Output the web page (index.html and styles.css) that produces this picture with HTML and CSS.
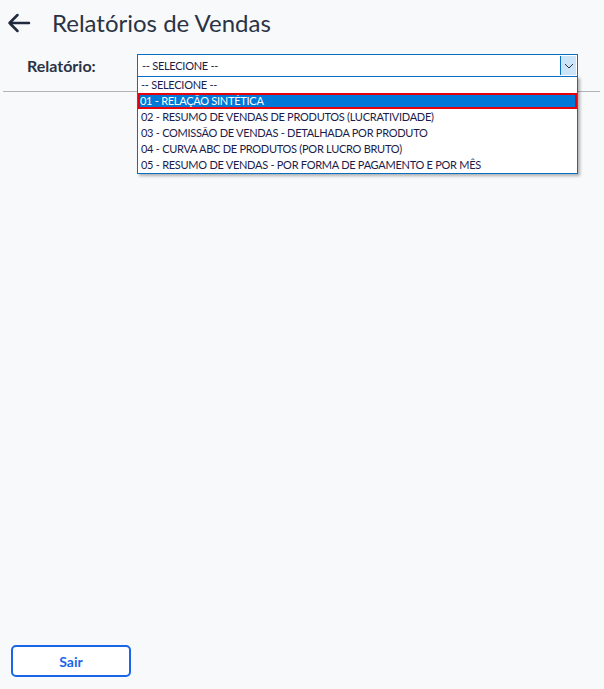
FILE: index.html
```html
<!DOCTYPE html>
<html lang="pt">
<head>
    <meta charset="UTF-8">
    <meta name="viewport" content="width=device-width, initial-scale=1.0">
    <title>Relatórios de Vendas</title>
    <link rel="stylesheet" href="styles.css">
</head>
<body>

<div class="page">
    <div class="header">
        <a class="back" href="#">
            <svg width="24" height="20" viewBox="0 0 24 20">
                <path d="M22 10H2.5M10.5 2L2.5 10l8 8" fill="none" stroke="#1f2a3c" stroke-width="2.5" stroke-linecap="round" stroke-linejoin="round"/>
            </svg>
        </a>
        <h1>Relatórios de Vendas</h1>
    </div>

    <div class="form-row">
        <label>Relatório:</label>
        <div class="select">
            <span class="select-value">-- SELECIONE --</span>
            <span class="select-btn">
                <svg width="10" height="6" viewBox="0 0 10 6"><path d="M1 1l4 4 4-4" fill="none" stroke="#333" stroke-width="1"/></svg>
            </span>
            <ul class="options">
                <li>-- SELECIONE --</li>
                <li class="active">01 - RELAÇÃO SINTÉTICA</li>
                <li>02 - RESUMO DE VENDAS DE PRODUTOS (LUCRATIVIDADE)</li>
                <li>03 - COMISSÃO DE VENDAS - DETALHADA POR PRODUTO</li>
                <li>04 - CURVA ABC DE PRODUTOS (POR LUCRO BRUTO)</li>
                <li>05 - RESUMO DE VENDAS - POR FORMA DE PAGAMENTO E POR MÊS</li>
            </ul>
        </div>
    </div>
    <div class="divider"></div>

    <div class="content"></div>

    <div class="footer">
        <button class="btn-sair">Sair</button>
    </div>
</div>

</body>
</html>
```

FILE: styles.css
```css
body {
    font-family: Lato, "Noto Sans", sans-serif;
    background-color: #f8f9fa;
    margin: 0;
    color: #1f2a3c;
}
.page {
    height: 689px;
    display: flex;
    flex-direction: column;
}
.header {
    display: flex;
    align-items: center;
    height: 46px;
    padding-left: 7px;
}
.back {
    display: flex;
    width: 45px;
}
.header h1 {
    margin: 0;
    font-size: 24px;
    font-weight: 400;
    color: #2a3345;
    position: relative;
    top: -1px;
}
.form-row {
    display: flex;
    align-items: center;
    padding-top: 8px;
    height: 23px;
}
.form-row label {
    width: 110px;
    padding-left: 27px;
    font-size: 16px;
    font-weight: 700;
    color: #2a3345;
}
.select {
    position: relative;
    width: 439px;
    height: 21px;
    border: 1px solid #0a6fc2;
    background: #fff;
    display: flex;
    align-items: center;
    font-size: 11px;
    letter-spacing: -0.27px;
    color: #1c1c4a;
}
.select-value {
    flex: 1;
    padding-left: 4px;
}
.select-btn {
    width: 15px;
    height: 19px;
    margin-right: 1px;
    background: #cce4f7;
    border-left: 1px solid #0a6fc2;
    display: flex;
    align-items: center;
    justify-content: center;
}
.options {
    position: absolute;
    left: -1px;
    top: 21px;
    width: 439px;
    margin: 0;
    padding: 0;
    list-style: none;
    background: #fff;
    border: 1px solid #0a6fc2;
    box-shadow: 2px 2px 3px rgba(0, 0, 0, 0.3);
    z-index: 2;
}
.options li {
    height: 16px;
    line-height: 15px;
    padding-left: 3px;
    white-space: nowrap;
}
.options li.active {
    background: #0078d7;
    color: #fff;
    outline: 2px solid #e8000b;
    outline-offset: -2px;
    padding-left: 2px;
}
.divider {
    height: 1px;
    background: #b3b3b3;
    margin: 14px 4px 0 3px;
}
.content {
    flex: 1;
}
.footer {
    padding: 0 0 12px 11px;
}
.btn-sair {
    width: 120px;
    height: 32px;
    background: #fff;
    border: 2px solid #1a66e8;
    border-radius: 5px;
    color: #1a66e8;
    font-family: Lato, "Noto Sans", sans-serif;
    font-size: 14px;
    font-weight: 700;
}
```
